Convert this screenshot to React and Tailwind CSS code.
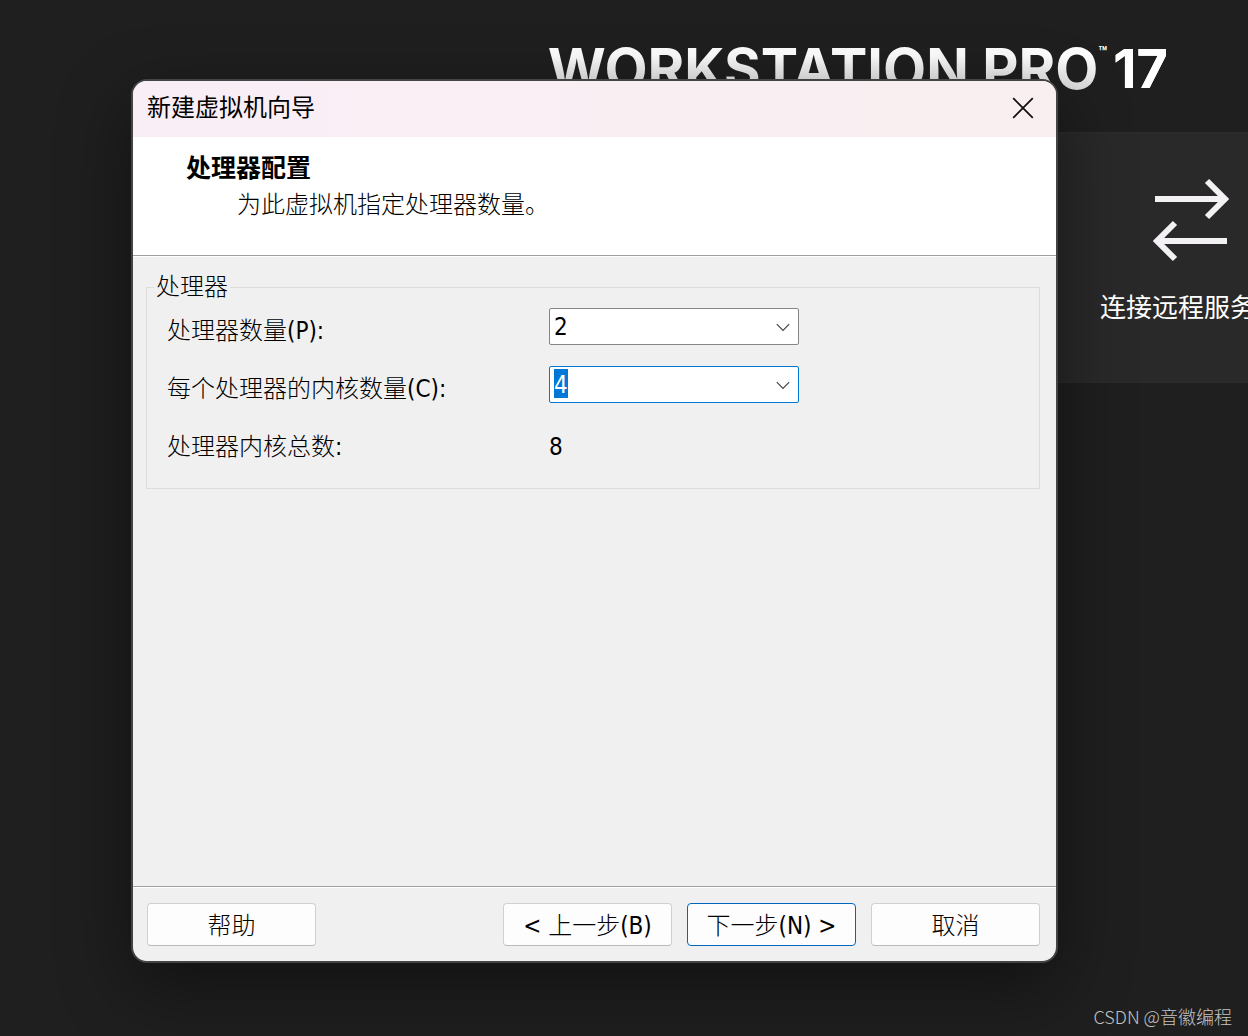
// src/App.jsx
import { useState } from 'react';

const counts = [1, 2, 4, 8];

const Chevron = () => (
  <svg
    className="pointer-events-none absolute top-1/2 right-2 h-4 w-4 -translate-y-1/2"
    viewBox="0 0 16 16"
    fill="none"
    stroke="#444444"
    strokeWidth="1.2"
    aria-hidden="true"
  >
    <path d="M1.8 5.2 L8 11.4 L14.2 5.2" />
  </svg>
);

const Backdrop = () => (
  <div className="flex w-full flex-col items-end">
    <header className="flex h-[132px] items-start pt-9 pr-20">
      <h1 className="flex items-start bg-linear-to-b from-white from-30% to-[#dcdcdc] to-80% bg-clip-text font-[Inter,sans-serif] text-[56px] leading-[66px] font-bold whitespace-nowrap text-transparent">
        <span>WORKSTATION PRO</span>
        <sup className="top-0 pt-2 text-sm leading-4 font-bold text-white">™</sup>
        <span className="pl-1.5 text-[54px] font-bold text-white">17</span>
      </h1>
    </header>
    <section className="flex h-[251px] w-1/2 justify-end border-y border-[#2c2c2c] bg-[#292929]">
      <a
        href="#remote"
        className="-mr-[34px] flex flex-col items-center pt-[45px] text-[26px] leading-9 whitespace-nowrap text-white"
      >
        <svg
          className="mb-7 h-[84px] w-20"
          viewBox="0 0 80 84"
          fill="none"
          stroke="#f3f1f3"
          strokeWidth="6"
          aria-hidden="true"
        >
          <path d="M4 21 H73 M56 3 L74 21 L56 39" />
          <path d="M76 63 H7 M24 45 L6 63 L24 81" />
        </svg>
        连接远程服务器
      </a>
    </section>
  </div>
);

const DialogButton = ({ children, primary }) => (
  <button
    type="button"
    className={
      primary
        ? 'h-[43px] w-[169px] rounded border border-[#0067c0] bg-[#fdfdfd] pt-0.5 whitespace-nowrap'
        : 'h-[43px] w-[169px] rounded border border-[#d0d0d0] border-b-[#bababa] bg-[#fdfdfd] pt-0.5 whitespace-nowrap'
    }
  >
    {children}
  </button>
);

const WizardDialog = () => {
  const [processors, setProcessors] = useState(2);
  const [cores, setCores] = useState(4);

  return (
    <div
      role="dialog"
      aria-labelledby="wizard-title"
      className="absolute top-[79px] right-[190px] bottom-[73px] left-[131px] flex flex-col overflow-hidden rounded-2xl border-2 border-[#444444] bg-[#f0f0f0] text-2xl leading-8 font-light text-black shadow-[0_24px_72px_rgba(0,0,0,0.45)]"
    >
      {/* Title bar */}
      <div className="flex h-14 shrink-0 items-center justify-between bg-linear-to-r from-[#f9eef6] to-[#f9eff0] pr-[21px] pb-0.5 pl-3.5">
        <h2 id="wizard-title" className="font-normal">
          新建虚拟机向导
        </h2>
        <button type="button" aria-label="关闭" className="flex h-6 w-6 items-center justify-center">
          <svg className="h-[22px] w-[22px]" viewBox="0 0 22 22" stroke="#111111" strokeWidth="1.8">
            <path d="M1.2 1.2 L20.8 20.8 M20.8 1.2 L1.2 20.8" />
          </svg>
        </button>
      </div>

      {/* Page heading */}
      <div className="h-[119px] shrink-0 border-b border-[#a0a0a0] bg-white pt-3.5 pl-[53px]">
        <h3 className="text-[25px] leading-9 font-bold">处理器配置</h3>
        <p className="pl-[51px] leading-9">为此虚拟机指定处理器数量。</p>
      </div>

      {/* Processor settings */}
      <div className="grow border-t border-white px-[13px] pt-3.5 pr-4">
        <fieldset className="h-[218px] border border-[#dcdcdc] px-5">
          <legend className="-ml-[13px] px-0.5">处理器</legend>
          <div className="grid grid-cols-[382px_250px] gap-y-[21px] pt-[5px]">
            <label htmlFor="processors" className="pt-[9px] leading-7">
              处理器数量(P):
            </label>
            <div className="relative">
              <select
                id="processors"
                value={processors}
                onChange={(e) => setProcessors(Number(e.target.value))}
                className="h-[37px] w-full appearance-none rounded-xs border border-[#868686] bg-white pl-1"
              >
                {counts.map((n) => (
                  <option key={n}>{n}</option>
                ))}
              </select>
              <Chevron />
            </div>

            <label htmlFor="cores" className="pt-[9px] leading-7">
              每个处理器的内核数量(C):
            </label>
            <div className="relative">
              <select
                id="cores"
                value={cores}
                onChange={(e) => setCores(Number(e.target.value))}
                className="h-[37px] w-full appearance-none rounded-xs border border-[#0078d7] bg-white bg-[linear-gradient(#0078d7,#0078d7)] bg-[length:14px_29px] bg-[position:4px_2px] bg-no-repeat pl-1 text-white"
              >
                {counts.map((n) => (
                  <option key={n} className="text-black">
                    {n}
                  </option>
                ))}
              </select>
              <Chevron />
            </div>

            <span className="pt-[9px] leading-7">处理器内核总数:</span>
            <output htmlFor="processors cores" className="pt-[9px] leading-7">
              {processors * cores}
            </output>
          </div>
        </fieldset>
      </div>

      {/* Footer */}
      <div className="shrink-0 border-t border-[#a0a0a0]">
        <div className="flex h-[74px] items-start justify-between border-t border-white pt-[15px] pr-4 pl-3.5">
          <DialogButton>帮助</DialogButton>
          <div className="flex gap-[15px]">
            <DialogButton>&lt; 上一步(B)</DialogButton>
            <DialogButton primary>下一步(N) &gt;</DialogButton>
            <DialogButton>取消</DialogButton>
          </div>
        </div>
      </div>
    </div>
  );
};

const App = () => {
  return (
    <main className="relative flex min-h-screen flex-col justify-between overflow-hidden bg-[#1f1f1f] font-['DejaVu_Sans_Condensed','Noto_Sans_CJK_SC',sans-serif]">
      <Backdrop />
      <WizardDialog />
      <p className="self-end pr-4 pb-2 font-['Noto_Sans_CJK_SC',sans-serif] text-lg leading-6 font-light text-[#c4c4c4]">
        CSDN @音徽编程
      </p>
    </main>
  );
};

export default App;
